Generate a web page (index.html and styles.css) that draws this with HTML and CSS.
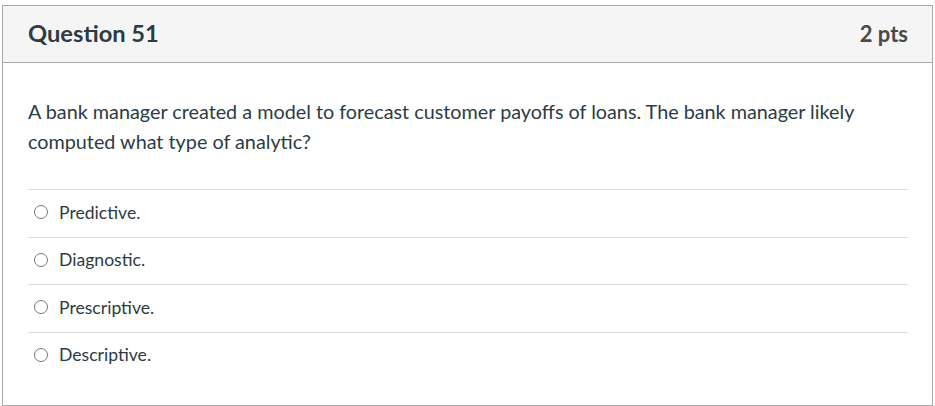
FILE: index.html
```html
<!DOCTYPE html>
<html>
<head>
<meta charset="utf-8">
<link rel="stylesheet" href="styles.css">
</head>
<body>
<div class="question">
  <div class="header">
    <h2 class="title">Question 51</h2>
    <span class="pts">2 pts</span>
  </div>
  <div class="content">
    <p class="text">A bank manager created a model to forecast customer payoffs of loans. The bank manager likely computed what type of analytic?</p>
    <div class="answers">
      <label class="answer"><span class="radio"></span><span>Predictive.</span></label>
      <label class="answer"><span class="radio"></span><span>Diagnostic.</span></label>
      <label class="answer"><span class="radio"></span><span>Prescriptive.</span></label>
      <label class="answer"><span class="radio"></span><span>Descriptive.</span></label>
    </div>
  </div>
</div>
</body>
</html>
```
FILE: styles.css
```css
html, body { margin: 0; padding: 0; background: #fff; }
body { font-family: Lato, "Open Sans", sans-serif; color: #2d3b45; }
.question {
  margin: 5px 0 0 2px;
  width: 931px;
  height: 401px;
  box-sizing: border-box;
  border: 1px solid #a9a9a9;
}
.header {
  height: 57px;
  box-sizing: border-box;
  background: #f5f5f5;
  border-bottom: 1px solid #a9a9a9;
  display: flex;
  align-items: center;
  justify-content: space-between;
  padding: 0 24px 1px 25px;
}
.title { margin: 0; font-size: 23.7px; font-weight: 700; line-height: 1; }
.pts { font-size: 22px; font-weight: 700; color: #4a4a4a; line-height: 1; }
.content { padding: 0 24px 0 25px; }
.text { margin: 33px 0 33px; font-size: 19.8px; line-height: 30px; }
.answers { display: flex; flex-direction: column; }
.answer {
  display: flex;
  align-items: center;
  height: 47.5px;
  box-sizing: border-box;
  border-top: 1px solid #dcdcdc;
  font-size: 17.6px;
  padding-left: 6px;
  padding-bottom: 2px;
  gap: 11px;
}
.radio {
  width: 14px; height: 14px;
  box-sizing: border-box;
  border: 1.4px solid #777;
  border-radius: 50%;
  flex: none;
}
```
